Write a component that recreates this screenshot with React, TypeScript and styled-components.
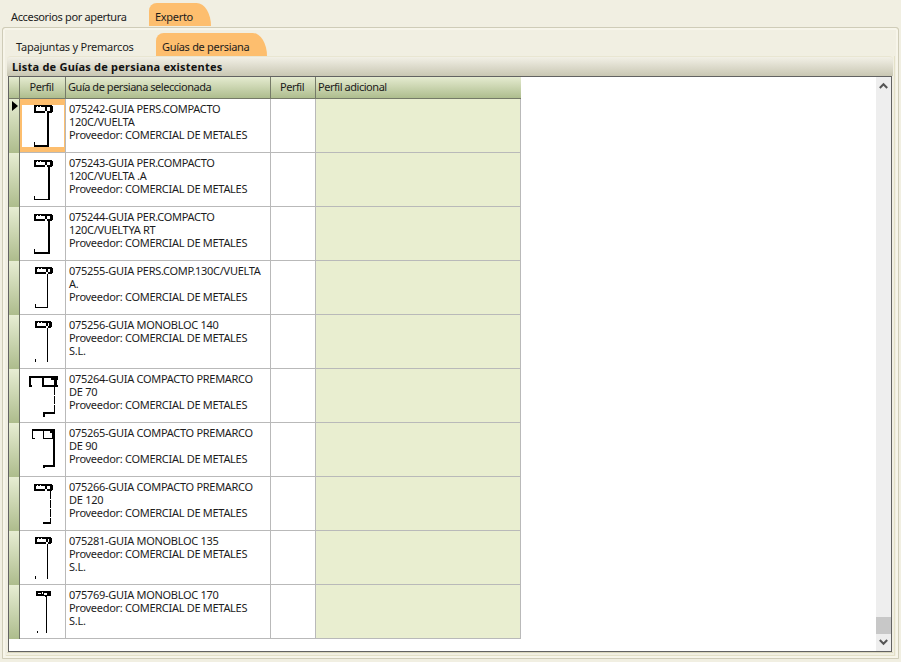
import React from 'react';
import styled, { createGlobalStyle } from 'styled-components';

const Global = createGlobalStyle`
  html, body { margin: 0; padding: 0; background: #f1efe2; }
  body { font-family: "Noto Sans", "DejaVu Sans", sans-serif; font-size: 11px; color: #1c1c1c; }
`;

const Page = styled.div`
  width: 901px; height: 662px; box-sizing: border-box; overflow: hidden;
  display: flex; flex-direction: column; background: #f1efe2;
`;
const TabStrip = styled.div<{ $pad: number; $top: number; $h: number; $bottom?: number }>`
  display: flex; align-items: stretch; box-sizing: border-box;
  height: ${p => p.$h}px; padding: ${p => p.$top}px 0 ${p => p.$bottom || 0}px ${p => p.$pad}px; flex: none;
`;
const Tab = styled.div<{ $w: number; $active?: boolean; $track?: number }>`
  width: ${p => p.$w}px; box-sizing: border-box; padding: 7px 0 0 ${p => (p.$active ? 6 : 2)}px;
  line-height: 14px; letter-spacing: ${p => p.$track ?? -0.3}px; white-space: nowrap;
  background: ${p => (p.$active ? '#fdbe6e' : 'transparent')};
  border-radius: 8px 15px 0 0 / 8px 24px 0 0;
`;
const OuterPanel = styled.div`
  flex: 1; min-height: 0; margin: 0 2px 3px 2px; box-sizing: border-box;
  border: 1px solid #e4e1c8; border-radius: 3px 3px 0 0;
  outline: 1px solid #cfccb8; outline-offset: -1px;
  padding: 1px 3px 2px 2px; display: flex; flex-direction: column; background: #f1efe2;
  box-shadow: inset 0 0 0 2px #f7f5ea;
`;
const InnerPanel = styled.div`
  flex: 1; min-height: 0; box-sizing: border-box; padding: 0 1px 2px 1px;
  display: flex; flex-direction: column; margin-left: 1px;
  border-right: 1px solid #e4e1c8; border-bottom: 1px solid #e4e1c8;
`;
const GroupBox = styled.div`
  flex: 1; min-height: 0; display: flex; flex-direction: column;
  border-bottom: 1px solid #d9d6bd;
`;
const GroupTitle = styled.div`
  height: 20px; flex: none; box-sizing: border-box; padding: 3px 0 0 5px; line-height: 14px;
  font-weight: 700; color: #111; letter-spacing: 0.21px;
  background: linear-gradient(#f2f0e6, #c9c7b3); border-radius: 4px 4px 0 0;
  border-top: 1px solid #e9e6d2;
`;
const GridFrame = styled.div`
  flex: 1; min-height: 0; margin: 0 1px 0 1px; display: flex; background: #fff;
  border: 1px solid #626262; border-left-width: 1px;
`;
const Table = styled.div`
  width: 512px; flex: none; display: flex; flex-direction: column;
`;
const Blank = styled.div`
  flex: 1; background: #fff;
`;
const Scrollbar = styled.div`
  width: 15px; flex: none; background: #eeeeee; display: flex; flex-direction: column; align-items: center;
`;
const ScrollSpace = styled.div`
  flex: 1; min-height: 0;
`;
const ScrollBtn = styled.div`
  height: 17px; flex: none; display: flex; align-items: center; justify-content: center;
`;
const Thumb = styled.div`
  width: 15px; height: 17px; flex: none; background: #c8c8c8;
`;
const Cols = '11px 46px 205px 45px 205px';
const HeadRow = styled.div`
  display: grid; grid-template-columns: ${Cols}; height: 22px; flex: none; box-sizing: border-box;
  background: linear-gradient(#e5ebd0, #aebd8e); border-bottom: 1px solid #757a68;
`;
const HeadCell = styled.div<{ $center?: boolean }>`
  box-sizing: border-box; border-right: 1px solid #757a68; line-height: 20px;
  padding: ${p => (p.$center ? '0 2px 0 0' : '0 0 0 2px')};
  letter-spacing: -0.46px;
  text-align: ${p => (p.$center ? 'center' : 'left')}; white-space: nowrap; color: #1c1c1c;
  &:last-child { border-right: 0; border-left: 0; }
`;
const Row = styled.div`
  display: grid; grid-template-columns: ${Cols}; height: 54px; flex: none; box-sizing: border-box;
  border-bottom: 1px solid #b9b9b9; position: relative;
`;
const Gutter = styled.div`
  background: linear-gradient(#e7edd3, #adbc8c); border-right: 1px solid #6f7465; box-sizing: border-box; position: relative;
  margin-bottom: -1px;
`;
const Marker = styled.div`
  position: absolute; left: 3px; top: 2px; width: 0; height: 0;
  border-left: 6px solid #000; border-top: 5.5px solid transparent; border-bottom: 5.5px solid transparent;
`;
const ImageCell = styled.div<{ $selected?: boolean }>`
  border-right: 1px solid #b9b9b9; box-sizing: border-box; background: #fff; display: block;
  ${p => p.$selected ? 'background: linear-gradient(#fdbe6e 6px, #fff 6px, #fff 48px, #fdbe6e 48px);' : ''}
`;
const ProfileSvg = styled.svg<{ $selected?: boolean }>`
  display: block; width: 45px; height: 53px;
  ${p => p.$selected ? 'border-left: 2px solid #fdbe6e; border-right: 1px solid #fdbe6e; width: 42px; margin: 0;' : ''}
`;
const TextCell = styled.div`
  border-right: 1px solid #b9b9b9; box-sizing: border-box; padding: 3px 2px 0 3px; line-height: 13px; white-space: nowrap;
  letter-spacing: -0.29px;
`;
const EmptyCell = styled.div`
  border-right: 1px solid #b9b9b9; box-sizing: border-box;
`;
const GreenCell = styled.div`
  background: #e9eed0; border-right: 1px solid #b9b9b9; box-sizing: border-box;
`;

type R = [number, number, number, number];
type Prof = { black: R[]; white?: R[] };

// x is the page column (the image column starts at 20), y is counted from the top of the row
const block = (x: number, y: number, w: number, h: number): { black: R[]; white: R[] } => ({
  black: [[x, y, w, h]],
  white: [
    [x + 2, y + 2, 9, h - 4],
    [x + 3, y + 1, 1, 1],
    [x + 6, y + 1, 1, 1],
    [x + 13, y + 2, w - 16, h - 4],
    [x + 11, y + h - 2, 2, 2],
    [x + w - 1, y, 1, 1],
    [x + w - 1, y + h - 1, 1, 1],
  ],
});
const join = (b: { black: R[]; white: R[] }, extra: R[], whiteExtra: R[] = []): Prof => ({ black: [...b.black, ...extra], white: [...b.white, ...whiteExtra] });
const dots = (x: number, y0: number, y1: number): R[] => {
  const out: R[] = [];
  for (let y = y0; y < y1; y += 1) if ((y - y0) % 9 !== 8) out.push([x, y, 1, 1]);
  return out;
};

const profiles: Prof[] = [
  join(block(34, 6, 19, 8), [[47, 14, 2, 33], [34, 46, 15, 2], [34, 43, 1, 4]]),
  join(block(34, 7, 19, 7), [[48, 14, 2, 33], [34, 46, 15, 1], [34, 43, 1, 3]]),
  join(block(34, 7, 19, 7), [[48, 14, 2, 33], [34, 45, 15, 2], [34, 42, 1, 4]]),
  join(block(35, 6, 18, 7), [[47, 13, 1, 34], [35, 46, 13, 1], [35, 43, 1, 3]]),
  join(block(35, 6, 17, 7), [[47, 13, 1, 34], [35, 44, 1, 3]]),
  {
    black: [[29, 7, 29, 2], [29, 7, 2, 10], [29, 16, 3, 2], [42, 7, 2, 10], [42, 16, 16, 2], [51, 9, 7, 2], [54, 11, 3, 7], ...dots(54, 18, 43), [43, 43, 12, 2], [43, 43, 2, 5]],
  },
  {
    black: [[32, 6, 23, 2], [32, 6, 1, 10], [32, 15, 3, 1], [43, 6, 1, 10], [43, 15, 10, 1], [50, 8, 5, 2], [52, 10, 3, 6], [53, 14, 2, 30], [43, 42, 12, 2], [43, 42, 2, 3]],
  },
  join(block(34, 7, 19, 7), [...dots(50, 14, 45), [43, 45, 8, 2], [43, 45, 2, 2]]),
  join(block(35, 6, 17, 7), [[47, 13, 1, 35], [35, 45, 1, 3]]),
  {
    black: [[36, 6, 15, 5], [45, 11, 2, 1], [46, 12, 1, 36], [37, 46, 1, 2]],
    white: [[38, 8, 3, 1], [42, 7, 1, 2], [44, 8, 3, 2]],
  },
];

const data: [string, string, string][] = [
  ['075242-GUIA PERS.COMPACTO', '120C/VUELTA', 'Proveedor: COMERCIAL DE METALES'],
  ['075243-GUIA PER.COMPACTO', '120C/VUELTA .A', 'Proveedor: COMERCIAL DE METALES'],
  ['075244-GUIA PER.COMPACTO', '120C/VUELTYA RT', 'Proveedor: COMERCIAL DE METALES'],
  ['075255-GUIA PERS.COMP.130C/VUELTA', 'A.', 'Proveedor: COMERCIAL DE METALES'],
  ['075256-GUIA MONOBLOC 140', 'Proveedor: COMERCIAL DE METALES', 'S.L.'],
  ['075264-GUIA COMPACTO PREMARCO', 'DE 70', 'Proveedor: COMERCIAL DE METALES'],
  ['075265-GUIA COMPACTO PREMARCO', 'DE 90', 'Proveedor: COMERCIAL DE METALES'],
  ['075266-GUIA COMPACTO PREMARCO', 'DE 120', 'Proveedor: COMERCIAL DE METALES'],
  ['075281-GUIA MONOBLOC 135', 'Proveedor: COMERCIAL DE METALES', 'S.L.'],
  ['075769-GUIA MONOBLOC 170', 'Proveedor: COMERCIAL DE METALES', 'S.L.'],
];

const Profile = ({ p, selected }: { p: Prof; selected?: boolean }) => (
  <ProfileSvg $selected={selected} viewBox={selected ? '22 0 42 53' : '20 0 45 53'} shapeRendering="crispEdges">
    {p.black.map((r, i) => <rect key={i} x={r[0]} y={r[1]} width={r[2]} height={r[3]} fill="#000" />)}
    {(p.white || []).map((r, i) => <rect key={i} x={r[0]} y={r[1]} width={r[2]} height={r[3]} fill="#fff" />)}
  </ProfileSvg>
);

export default function App() {
  return (
    <Page>
      <Global />
      <TabStrip $pad={9} $top={3} $h={27} $bottom={1}>
        <Tab $w={140} $track={-0.35}>Accesorios por apertura</Tab>
        <Tab $w={62} $active>Experto</Tab>
      </TabStrip>
      <OuterPanel>
        <TabStrip $pad={9} $top={4} $h={27}>
          <Tab $w={142} $track={-0.23}>Tapajuntas y Premarcos</Tab>
          <Tab $w={111} $active>Guías de persiana</Tab>
        </TabStrip>
        <InnerPanel>
          <GroupBox>
            <GroupTitle>Lista de Guías de persiana existentes</GroupTitle>
            <GridFrame>
              <Table>
                <HeadRow>
                  <HeadCell />
                  <HeadCell $center>Perfil</HeadCell>
                  <HeadCell>Guía de persiana seleccionada</HeadCell>
                  <HeadCell $center>Perfil</HeadCell>
                  <HeadCell>Perfil adicional</HeadCell>
                </HeadRow>
                {data.map((d, i) => (
                  <Row key={d[0]}>
                    <Gutter>{i === 0 && <Marker />}</Gutter>
                    <ImageCell $selected={i === 0}><Profile p={profiles[i]} selected={i === 0} /></ImageCell>
                    <TextCell>{d[0]}<br />{d[1]}<br />{d[2]}</TextCell>
                    <EmptyCell />
                    <GreenCell />
                  </Row>
                ))}
              </Table>
              <Blank />
              <Scrollbar>
                <ScrollBtn>
                  <svg width="9" height="7" viewBox="0 0 9 7"><path d="M0.8 6L4.5 2.2L8.2 6" fill="none" stroke="#555" strokeWidth="2" /></svg>
                </ScrollBtn>
                <ScrollSpace />
                <Thumb />
                <ScrollBtn>
                  <svg width="9" height="7" viewBox="0 0 9 7"><path d="M0.8 1L4.5 4.8L8.2 1" fill="none" stroke="#555" strokeWidth="2" /></svg>
                </ScrollBtn>
              </Scrollbar>
            </GridFrame>
          </GroupBox>
        </InnerPanel>
      </OuterPanel>
    </Page>
  );
}
